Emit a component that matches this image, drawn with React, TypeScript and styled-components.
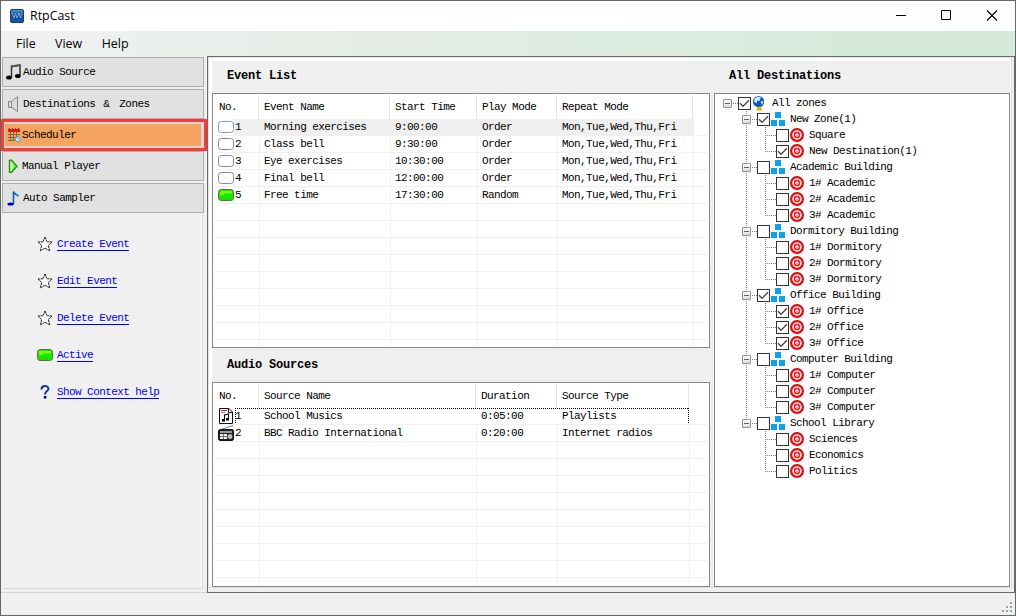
import React from "react";
import styled, { createGlobalStyle, css } from "styled-components";

const GlobalStyle = createGlobalStyle`
  * { box-sizing: border-box; }
  body {
    margin: 0;
    background: #f0f0f0;
    color: #000;
    font: 11px/16px "Liberation Mono", monospace;
    letter-spacing: -0.58px;
    white-space: pre;
  }
`;

const Window = styled.div`
  width: 1016px;
  height: 616px;
  border: 1px solid #5f6a66;
  background: #f0f0f0;
  display: flex;
  flex-direction: column;
  overflow: hidden;
`;

const TitleBar = styled.header`
  height: 30px;
  flex: none;
  display: flex;
  align-items: center;
  background: #fff;
  padding: 0 16px 0 9px;
  font: 12.4px/16px "Open Sans", sans-serif;
  letter-spacing: 0;
`;

const AppName = styled.span`
  margin-left: 6px;
  flex: 1;
`;

const WindowButtons = styled.div`
  display: flex;
  gap: 34px;
  margin-right: 1px;
`;

const MenuBar = styled.nav`
  height: 25px;
  flex: none;
  display: flex;
  align-items: center;
  gap: 19.5px;
  padding-left: 15px;
  font: 12.4px/16px "Open Sans", sans-serif;
  letter-spacing: 0;
  background: linear-gradient(90deg, #f0f0f0 0, #ecf0ee 12%, #e4ede5 35%, #d8ebdc 75%, #d4e9d7 100%);
`;

const Main = styled.div`
  height: 537px;
  flex: none;
  display: flex;
`;

const Sidebar = styled.aside`
  width: 206px;
  flex: none;
  display: flex;
  flex-direction: column;
  padding: 1px 2px 0 1px;
  border-bottom: 1px solid #d4d4d4;
`;

const NavButton = styled.button<{ $active?: boolean; $gap?: number }>`
  appearance: none;
  width: 202px;
  height: 30px;
  flex: none;
  margin: 0 0 ${(p) => p.$gap ?? 2}px;
  padding: 0 0 0 3px;
  display: flex;
  align-items: center;
  gap: 1px;
  border: 1px solid #adadad;
  background: #e1e1e1;
  color: #000;
  font: inherit;
  letter-spacing: inherit;
  white-space: pre;
  ${(p) =>
    p.$active &&
    css`
      width: 206px;
      height: 32px;
      margin-left: -1px;
      padding-left: 3px;
      border: 3px solid #fb3a36;
      background: #f4a460;
      box-shadow: inset 0 0 0 1px #d8d8d8, inset -3px 0 0 0 #d8d8d8, inset 0 2px 0 0 #d8d8d8, inset 0 -2px 0 0 #d8d8d8;
    `}
`;

const Ampersand = styled.span`
  margin: 0 4px 0 2px;
`;

const LinkPanel = styled.div`
  width: 199px;
  height: 375px;
  margin: -1px 0 0 2px;
  padding: 12px 0 0 33px;
  border-right: 1px solid #d5d5d5;
  border-bottom: 1px solid #d5d5d5;
  box-shadow: inset -1px 0 0 #fff;
`;

const LinkRow = styled.a`
  height: 37px;
  display: flex;
  align-items: center;
  gap: 4px;
  color: #0000ff;
  cursor: pointer;
  svg { margin-bottom: 1px; }
  span { border-bottom: 1px solid #0000ff; line-height: 11px; }
`;

const Frame = styled.main`
  width: 808px;
  height: 537px;
  border: 1px solid #696969;
  box-shadow: inset -2px -4px 0 #efefef, inset -3px -5px 0 #dcdcdc, inset 1px 1px 0 #e3e3e3;
  background: #fff;
  padding: 4px 4px 5px 4px;
`;

const Workspace = styled.div`
  height: 526px;
  width: 798px;
  display: flex;
  gap: 4px;
  background: #efefef;
`;

const Column = styled.section<{ $width: number }>`
  width: ${(p) => p.$width}px;
  flex: none;
  display: flex;
  flex-direction: column;
`;

const Heading = styled.h2<{ $height: number; $shift?: number }>`
  height: ${(p) => p.$height}px;
  flex: none;
  margin: 0;
  padding: ${(p) => p.$shift ?? 0}px 0 0 15px;
  font: bold 12px/16px "Liberation Mono", monospace;
  letter-spacing: -0.2px;
`;

const Box = styled.div<{ $height: number }>`
  height: ${(p) => p.$height}px;
  flex: none;
  border: 1px solid #828790;
  background: #fff;
  overflow: hidden;
`;

const HeaderRow = styled.div<{ $columns: string; $height: number }>`
  display: grid;
  grid-template-columns: ${(p) => p.$columns};
  height: ${(p) => p.$height}px;
  padding-top: 1px;
`;

const HeaderCell = styled.div`
  border-right: 1px solid #e5e5e5;
  padding-left: 5px;
  display: flex;
  align-items: center;
  &:first-child { padding-left: 6px; }
`;

const Body = styled.div`
  margin: 0 1px 1px 1px;
`;

const Row = styled.div<{ $columns: string; $selected?: boolean; $focused?: boolean; $short?: number }>`
  display: grid;
  grid-template-columns: ${(p) => p.$columns};
  height: ${(p) => p.$short ?? 17}px;
  border-bottom: ${(p) => (p.$short ? 0 : 1)}px solid #f0f0f0;
  ${(p) => p.$selected && css`background: linear-gradient(#efefef, #efefef) 20px 0 / 460px 17px no-repeat;`}
  ${(p) =>
    p.$focused &&
    css`
      background:
        repeating-linear-gradient(90deg, #000 0 1px, transparent 1px 2px) 21px 0 / 454px 1px no-repeat,
        repeating-linear-gradient(180deg, #000 0 1px, transparent 1px 2px) 21px 0 / 1px 16px no-repeat,
        repeating-linear-gradient(180deg, #000 0 1px, transparent 1px 2px) 474px 0 / 1px 16px no-repeat;
    `}
`;

const Cell = styled.div<{ $plain?: boolean }>`
  border-right: 1px solid ${(p) => (p.$plain ? "transparent" : "#f0f0f0")};
  padding-left: 4px;
  display: flex;
  align-items: center;
  gap: 1px;
  overflow: hidden;
`;

const TreeRow = styled.div`
  display: flex;
  height: 16px;
  align-items: center;
  padding-left: 8px;
`;

const dotsDown = "repeating-linear-gradient(180deg, #808080 0 1px, transparent 1px 2px)";
const dotsAcross = "repeating-linear-gradient(90deg, #808080 0 1px, transparent 1px 2px)";

const Guide = styled.span<{ $line?: boolean }>`
  width: 19px;
  height: 16px;
  ${(p) => p.$line && css`background: ${dotsDown} 4px 0 / 1px 16px no-repeat;`}
`;

const Branch = styled.span<{ $down: number }>`
  width: 15px;
  height: 16px;
  display: flex;
  align-items: center;
  background:
    ${dotsDown} 4px 0 / 1px ${(p) => p.$down}px no-repeat,
    ${dotsAcross} 4px 8px / 11px 1px no-repeat;
`;

const Expander = styled.span`
  width: 9px;
  height: 9px;
  margin-top: 1px;
  border: 1px solid #919191;
  border-radius: 1px;
  background:
    linear-gradient(#4b63a7, #4b63a7) 1px 3px / 5px 1px no-repeat,
    linear-gradient(#fff, #dedede);
`;

const CheckBox = styled.svg`
  width: 13px;
  height: 13px;
  flex: none;
  display: block;
`;

const TreeIcon = styled.span<{ $width: number }>`
  width: ${(p) => p.$width}px;
  margin-left: 1px;
  display: flex;
`;

const TreeLabel = styled.span<{ $gap: number }>`
  margin-left: ${(p) => p.$gap}px;
`;

const StatusBar = styled.footer`
  flex: 1;
  display: flex;
  align-items: flex-end;
  justify-content: flex-end;
  padding: 0 2px 2px 0;
`;

const AppIcon = () => (
  <svg width="14" height="14" viewBox="0 0 14 14">
    <defs>
      <linearGradient id="app" x2="0" y2="1">
        <stop offset="0" stopColor="#4f9bd8" />
        <stop offset=".45" stopColor="#164a90" />
        <stop offset="1" stopColor="#1757ab" />
      </linearGradient>
    </defs>
    <rect x=".5" y=".5" width="13" height="13" rx="1.5" fill="url(#app)" stroke="#153d78" />
    <path d="M2 4l2 5 1.500-4.500L7 9l2-5 1.500 5L12 4" fill="none" stroke="#8bb7e4" strokeWidth=".8" />
  </svg>
);

const NotesIcon = () => (
  <svg width="16" height="16" viewBox="0 0 16 16">
    <path d="M5.500 13V2.200L14 1v10.500" fill="none" stroke="#333" strokeWidth="1.500" />
    <path d="M5.500 2.400L14 1.200" stroke="#555" strokeWidth="2" />
    <ellipse cx="3" cy="13.500" rx="2.900" ry="2" fill="#000" />
    <ellipse cx="11.800" cy="12" rx="2.900" ry="2" fill="#000" />
  </svg>
);

const SpeakerIcon = () => (
  <svg width="16" height="16" viewBox="0 0 16 16" fill="#dcdcdc" stroke="#858585">
    <path d="M2.500 5.500h3v6h-3zM5.500 5.500L11.500 .8v14.700l-6-4z" />
  </svg>
);

const CalendarIcon = () => (
  <svg width="14" height="16" viewBox="0 0 14 16">
    <path d="M1 2h12v3H1z" fill="#d81a12" />
    <path d="M2.500 1v2M5.500 1v2M8.500 1v2M11.500 1v2" stroke="#a33" />
    <path d="M1 7.500h12M1 10.500h9M1 13.500h7M3.500 5v9M6.500 5v9M9.500 5v6" stroke="#7c6a42" fill="none" />
    <circle cx="11" cy="12.200" r="2.500" fill="#e8f8ff" stroke="#4f9cb5" />
    <path d="M11 10.700v1.500h1.200" stroke="#356" strokeWidth=".7" fill="none" />
  </svg>
);

const PlayIcon = () => (
  <svg width="15" height="16" viewBox="0 0 15 16">
    <defs>
      <linearGradient id="play" x2="1">
        <stop offset="0" stopColor="#eaffd8" />
        <stop offset="1" stopColor="#55d62b" />
      </linearGradient>
    </defs>
    <path d="M3.500 2.200h2l5.500 6.100-5.500 6h-2z" fill="url(#play)" stroke="#189a0c" strokeWidth="1.400" strokeLinejoin="round" />
  </svg>
);

const SingleNoteIcon = () => (
  <svg width="16" height="16" viewBox="0 0 16 16">
    <path d="M7.500 14V1.500C8 4 10.500 4.500 12.500 6" fill="none" stroke="#0b62b5" strokeWidth="1.600" />
    <ellipse cx="4.600" cy="14" rx="3.200" ry="1.600" fill="#0000a8" />
  </svg>
);

const StarIcon = () => (
  <svg width="16" height="16" viewBox="0 0 16 16">
    <path
      d="M8 1l2 4.800 5.200.2-3.900 3.500 1.400 5.400L8 12.200 3.300 14.900l1.400-5.400L.8 6 6 5.800z"
      fill="#fafafa"
      stroke="#222"
      strokeWidth="1"
      strokeDasharray="2.200 .5"
    />
  </svg>
);

const PillIcon = ({ kind }: { kind: "on" | "off" | "hot" }) => (
  <svg width="16" height="12" viewBox="0 0 16 12">
    <rect
      x=".5"
      y=".5"
      width="15"
      height="11"
      rx="2.800"
      fill={kind === "on" ? "#0cf000" : "#fff"}
      stroke={kind === "on" ? "#5c6b50" : kind === "hot" ? "#7d9fbd" : "#8c8c8c"}
    />
    {kind === "on" && (
      <>
        <path d="M2 2h12v2.500H6V6H2z" fill="#84f20c" />
        <path d="M2 8.500h9v2H2z" fill="#3cc805" />
      </>
    )}
  </svg>
);

const HelpIcon = () => (
  <svg width="16" height="16" viewBox="0 0 16 16">
    <path d="M4.500 5.500C4.500 1 11.500 1.200 11.500 4.700 11.500 7.200 8 7 8 10.500" fill="none" stroke="#0a3a9c" strokeWidth="2" />
    <path d="M6.800 12h2.600v2.500H6.800z" fill="#000080" />
  </svg>
);

const PlaylistIcon = () => (
  <svg width="16" height="16" viewBox="0 0 16 16">
    <path d="M1.500 .5h9.500l3.500 3.500v11.500h-13z" fill="#fff" stroke="#111" />
    <path d="M10.500 .5v4h4" fill="none" stroke="#111" />
    <path d="M3 2.500h6" stroke="#d22" />
    <path d="M3 4.500h4" stroke="#b77" />
    <path d="M6.500 12V7l4-1v5" fill="none" stroke="#000" strokeWidth="1.100" />
    <path d="M4 11h3v2.500H4zM8 10h3v2.500H8z" fill="#000" />
  </svg>
);

const RadioIcon = () => (
  <svg width="16" height="16" viewBox="0 0 16 16">
    <path d="M3 4.500L15 .5" stroke="#777" />
    <rect x=".5" y="4.500" width="15" height="11" rx="1.800" fill="#222" stroke="#111" />
    <path d="M2 7h12" stroke="#ccc" strokeWidth="1.400" />
    <path d="M2 9h7v5H2z" fill="#eee" />
    <path d="M5.500 9v5M2 11.500h7" stroke="#555" strokeWidth=".8" />
    <circle cx="12" cy="11.500" r="2" fill="#aaa" stroke="#eee" strokeWidth=".8" />
  </svg>
);

const GlobeIcon = () => (
  <svg width="14" height="16" viewBox="0 0 14 16">
    <path d="M4 15.500h6.500l-1.500-3H5.500z" fill="#dfb700" />
    <path d="M11.500 9.500Q9 13.500 5 12.500" fill="none" stroke="#e4bd16" strokeWidth="1.200" />
    <circle cx="6.500" cy="6.500" r="5.600" fill="#0b54c4" />
    <path d="M2.500 3.500l3.500-2L9 2.500 7.500 6l-2-.5L4.500 8.500 2 6.500zM8.500 6.500l3-.5-1.500 4z" fill="#c2f1fb" />
  </svg>
);

const ZoneIcon = () => (
  <svg width="14" height="14" viewBox="0 0 14 14" fill="#0aa2ee">
    <path d="M4 0h6v6H4zM0 8h6v6H0zM8 8h6v6H8z" />
  </svg>
);

const TargetIcon = () => (
  <svg width="14" height="14" viewBox="0 0 14 14">
    <circle cx="7" cy="7" r="5.900" fill="#f6e0e0" stroke="#e60808" strokeWidth="2.200" />
    <circle cx="7" cy="7" r="2.500" fill="#fff" stroke="#d92525" strokeWidth="1.400" />
    <circle cx="7" cy="7" r=".8" fill="#b66" />
  </svg>
);

const Check = ({ on }: { on?: boolean }) => (
  <CheckBox viewBox="0 0 13 13">
    <rect x=".5" y=".5" width="12" height="12" fill="#fff" stroke="#333" />
    {on && <path d="M2 6.300l3 3L11 3.300" fill="none" stroke="#444" strokeWidth="1.300" />}
  </CheckBox>
);

const eventCols = "46px 131px 87px 80px 136px 1fr";
const sourceCols = "46px 217px 81px 132px 1fr";

const week = "Mon,Tue,Wed,Thu,Fri";
const events = [
  ["Morning exercises", "9:00:00", "Order", week],
  ["Class bell", "9:30:00", "Order", week],
  ["Eye exercises", "10:30:00", "Order", week],
  ["Final bell", "12:00:00", "Order", week],
  ["Free time", "17:30:00", "Random", week],
];
const sources = [
  ["School Musics", "0:05:00", "Playlists"],
  ["BBC Radio International", "0:20:00", "Internet radios"],
];

type Leaf = [label: string, checked: boolean];
const zones: { name: string; checked: boolean; items: Leaf[] }[] = [
  { name: "New Zone(1)", checked: true, items: [["Square", false], ["New Destination(1)", true]] },
  { name: "Academic Building", checked: false, items: [["1# Academic", false], ["2# Academic", false], ["3# Academic", false]] },
  { name: "Dormitory Building", checked: false, items: [["1# Dormitory", false], ["2# Dormitory", false], ["3# Dormitory", false]] },
  { name: "Office Building", checked: true, items: [["1# Office", true], ["2# Office", true], ["3# Office", true]] },
  { name: "Computer Building", checked: false, items: [["1# Computer", false], ["2# Computer", false], ["3# Computer", false]] },
  { name: "School Library", checked: false, items: [["Sciences", false], ["Economics", false], ["Politics", false]] },
];

interface TableProps {
  columns: string;
  headHeight: number;
  heads: string[];
  rows: string[][];
  total: number;
  tail: number;
  icon: (index: number) => React.ReactNode;
  selected?: number;
  focused?: number;
}

const Table = ({ columns, headHeight, heads, rows, total, tail, icon, selected, focused }: TableProps) => (
  <>
    <HeaderRow $columns={columns} $height={headHeight}>
      {heads.map((h) => (
        <HeaderCell key={h}>{h}</HeaderCell>
      ))}
    </HeaderRow>
    <Body>
      {Array.from({ length: total + 1 }, (_, i) => (
        <Row key={i} $columns={columns} $selected={i === selected} $focused={i === focused} $short={i === total ? tail : undefined}>
          {heads.map((h, c) => (
            <Cell key={h} $plain={i === selected || i === focused}>
              {c === 0
                ? rows[i] && (
                    <>
                      {icon(i)}
                      <span>{i + 1}</span>
                    </>
                  )
                : rows[i]?.[c - 1]}
            </Cell>
          ))}
        </Row>
      ))}
    </Body>
  </>
);

const Tree = () => (
  <>
    <TreeRow>
      <Branch $down={0}>
        <Expander />
      </Branch>
      <Check on />
      <TreeIcon $width={14}>
        <GlobeIcon />
      </TreeIcon>
      <TreeLabel $gap={6}>All zones</TreeLabel>
    </TreeRow>
    {zones.map((zone, z) => {
      const lastZone = z === zones.length - 1;
      return (
        <React.Fragment key={zone.name}>
          <TreeRow>
            <Guide />
            <Branch $down={lastZone ? 8 : 16}>
              <Expander />
            </Branch>
            <Check on={zone.checked} />
            <TreeIcon $width={14}>
              <ZoneIcon />
            </TreeIcon>
            <TreeLabel $gap={5}>{zone.name}</TreeLabel>
          </TreeRow>
          {zone.items.map(([label, checked], n) => (
            <TreeRow key={label}>
              <Guide />
              <Guide $line={!lastZone} />
              <Branch $down={n === zone.items.length - 1 ? 8 : 16} />
              <Check on={checked} />
              <TreeIcon $width={14}>
                <TargetIcon />
              </TreeIcon>
              <TreeLabel $gap={5}>{label}</TreeLabel>
            </TreeRow>
          ))}
        </React.Fragment>
      );
    })}
  </>
);

const TreeBox = styled(Box)`
  padding-top: 1px;
`;

export default function App() {
  return (
    <>
      <GlobalStyle />
      <Window>
        <TitleBar>
          <AppIcon />
          <AppName>RtpCast</AppName>
          <WindowButtons>
            <svg width="12" height="12" viewBox="0 0 12 12">
              <path d="M1 5.500h10" stroke="#000" />
            </svg>
            <svg width="11" height="12" viewBox="0 0 11 12">
              <path d="M.5 .5h9v9H.5z" stroke="#000" fill="none" />
            </svg>
            <svg width="12" height="12" viewBox="0 0 12 12">
              <path d="M1 .5l10 10M11 .5L1 10.500" stroke="#000" strokeWidth="1.100" />
            </svg>
          </WindowButtons>
        </TitleBar>
        <MenuBar>
          <span>File</span>
          <span>View</span>
          <span>Help</span>
        </MenuBar>
        <Main>
          <Sidebar>
            <NavButton>
              <NotesIcon />
              Audio Source
            </NavButton>
            <NavButton $gap={0}>
              <SpeakerIcon />
              <span>
                Destinations <Ampersand>&amp;</Ampersand> Zones
              </span>
            </NavButton>
            <NavButton $active $gap={0}>
              <CalendarIcon />
              Scheduler
            </NavButton>
            <NavButton>
              <PlayIcon />
              Manual Player
            </NavButton>
            <NavButton>
              <SingleNoteIcon />
              Auto Sampler
            </NavButton>
            <LinkPanel>
              <LinkRow>
                <StarIcon />
                <span>Create Event</span>
              </LinkRow>
              <LinkRow>
                <StarIcon />
                <span>Edit Event</span>
              </LinkRow>
              <LinkRow>
                <StarIcon />
                <span>Delete Event</span>
              </LinkRow>
              <LinkRow>
                <PillIcon kind="on" />
                <span>Active</span>
              </LinkRow>
              <LinkRow>
                <HelpIcon />
                <span>Show Context help</span>
              </LinkRow>
            </LinkPanel>
          </Sidebar>
          <Frame>
            <Workspace>
              <Column $width={498}>
                <Heading $height={32} $shift={7}>Event List</Heading>
                <Box $height={255}>
                  <Table
                    columns={eventCols}
                    headHeight={25}
                    heads={["No.", "Event Name", "Start Time", "Play Mode", "Repeat Mode"]}
                    rows={events}
                    total={13}
                    tail={6}
                    icon={(i) => <PillIcon kind={i === 4 ? "on" : i === 0 ? "hot" : "off"} />}
                    selected={0}
                  />
                </Box>
                <Heading $height={34} $shift={9}>Audio Sources</Heading>
                <Box $height={205}>
                  <Table
                    columns={sourceCols}
                    headHeight={25}
                    heads={["No.", "Source Name", "Duration", "Source Type"]}
                    rows={sources}
                    total={10}
                    tail={7}
                    icon={(i) => (i === 0 ? <PlaylistIcon /> : <RadioIcon />)}
                    focused={0}
                  />
                </Box>
              </Column>
              <Column $width={296}>
                <Heading $height={32} $shift={7}>All Destinations</Heading>
                <TreeBox $height={494}>
                  <Tree />
                </TreeBox>
              </Column>
            </Workspace>
          </Frame>
        </Main>
        <StatusBar>
          <svg width="11" height="11" viewBox="0 0 11 11" fill="#a0a0a0">
            <path d="M8 0h2v2H8zM4 4h2v2H4zM8 4h2v2H8zM0 8h2v2H0zM4 8h2v2H4zM8 8h2v2H8z" />
          </svg>
        </StatusBar>
      </Window>
    </>
  );
}
